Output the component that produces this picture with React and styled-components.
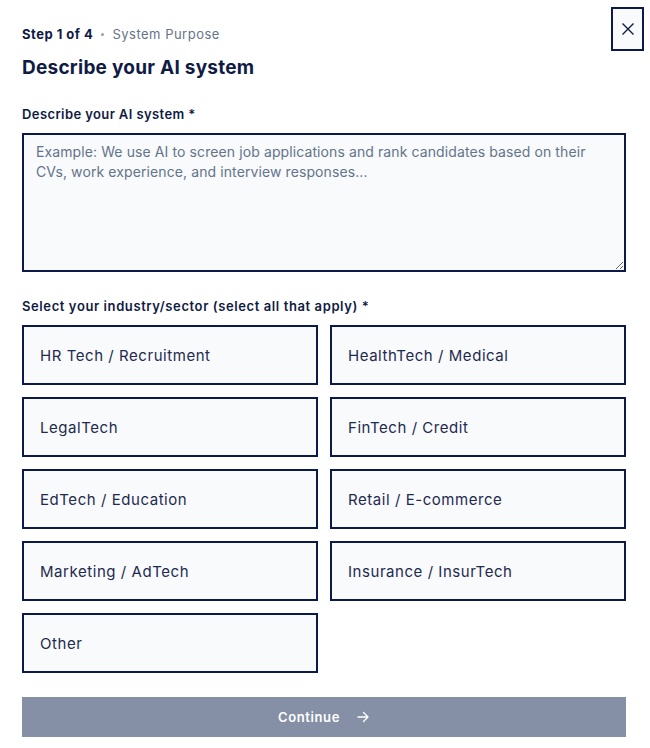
import React from 'react';
import styled, { createGlobalStyle } from 'styled-components';

const GlobalStyle = createGlobalStyle`
  * { box-sizing: border-box; }
  body {
    margin: 0;
    background: #ffffff;
    font-family: Inter, "Noto Sans", sans-serif;
    color: #0f1b44;
  }
`;

const Page = styled.div`
  position: relative;
  width: 650px;
  padding: 25px 24px 0 22px;
`;

const CloseButton = styled.button`
  position: absolute;
  top: 7px;
  right: 6px;
  width: 33px;
  height: 44px;
  display: flex;
  align-items: center;
  justify-content: center;
  background: #f8fafc;
  border: 2px solid #0b1a4a;
  padding: 0;
  color: #0f1b44;
  cursor: pointer;
`;

const StepLine = styled.div`
  display: flex;
  align-items: center;
  gap: 8px;
  font-size: 13px;
  line-height: 18px;
  letter-spacing: 0.5px;
`;

const StepCount = styled.span`
  font-weight: 700;
  color: #0f1b44;
`;

const Dot = styled.span`
  width: 3px;
  height: 3px;
  border-radius: 50%;
  background: #94a3b8;
`;

const StepName = styled.span`
  color: #64748b;
`;

const Title = styled.h1`
  margin: 12px 0 0;
  font-size: 19px;
  line-height: 26px;
  font-weight: 700;
  letter-spacing: 0.25px;
  color: #0f1b44;
`;

const Label = styled.label`
  display: block;
  margin: ${p => p.$top}px 0 10px;
  font-size: 13px;
  line-height: 18px;
  font-weight: 600;
  letter-spacing: ${p => p.$spacing}px;
  color: #0f1b44;
`;

const TextArea = styled.textarea`
  display: block;
  width: 604px;
  height: 139px;
  padding: 7px 12px;
  background: #f8fafc;
  border: 2px solid #0b1a4a;
  border-radius: 0;
  font-family: inherit;
  font-size: 14px;
  line-height: 20px;
  letter-spacing: 0.1px;
  color: #0f1b44;
  resize: vertical;
  outline: none;

  &::placeholder {
    color: #64748b;
  }
`;

const Grid = styled.div`
  display: grid;
  grid-template-columns: 1fr 1fr;
  gap: 12px;
  width: 604px;
`;

const Option = styled.button`
  height: 60px;
  display: flex;
  align-items: center;
  padding: 0 16px;
  background: #f8fafc;
  border: 2px solid #0b1a4a;
  font-family: inherit;
  font-size: 15px;
  letter-spacing: 0.55px;
  color: #1e2a4f;
  text-align: left;
  cursor: pointer;
`;

const Continue = styled.button`
  margin-top: 24px;
  width: 604px;
  height: 40px;
  display: flex;
  align-items: center;
  justify-content: center;
  gap: 16px;
  background: #858fa5;
  border: none;
  font-family: inherit;
  font-size: 13px;
  font-weight: 600;
  letter-spacing: 0.6px;
  color: #ffffff;
`;

const sectors = [
  'HR Tech / Recruitment',
  'HealthTech / Medical',
  'LegalTech',
  'FinTech / Credit',
  'EdTech / Education',
  'Retail / E-commerce',
  'Marketing / AdTech',
  'Insurance / InsurTech',
  'Other',
];

export default function App() {
  return (
    <Page>
      <GlobalStyle />
      <CloseButton aria-label="Close">
        <svg width="14" height="14" viewBox="0 0 14 14" fill="none" stroke="currentColor" strokeWidth="1.4">
          <path d="M1.5 1.5l11 11M12.5 1.5l-11 11" />
        </svg>
      </CloseButton>
      <StepLine>
        <StepCount>Step 1 of 4</StepCount>
        <Dot />
        <StepName>System Purpose</StepName>
      </StepLine>
      <Title>Describe your AI system</Title>
      <Label $top={24} $spacing={0.4}>Describe your AI system *</Label>
      <TextArea placeholder="Example: We use AI to screen job applications and rank candidates based on their CVs, work experience, and interview responses..." />
      <Label $top={25} $spacing={0.6}>Select your industry/sector (select all that apply) *</Label>
      <Grid>
        {sectors.map(s => (
          <Option key={s} type="button">{s}</Option>
        ))}
      </Grid>
      <Continue type="button">
        Continue
        <svg width="14" height="14" viewBox="0 0 14 14" fill="none" stroke="currentColor" strokeWidth="1.4" strokeLinecap="round" strokeLinejoin="round">
          <path d="M2 7h10M7.5 2.5L12 7l-4.5 4.5" />
        </svg>
      </Continue>
    </Page>
  );
}
